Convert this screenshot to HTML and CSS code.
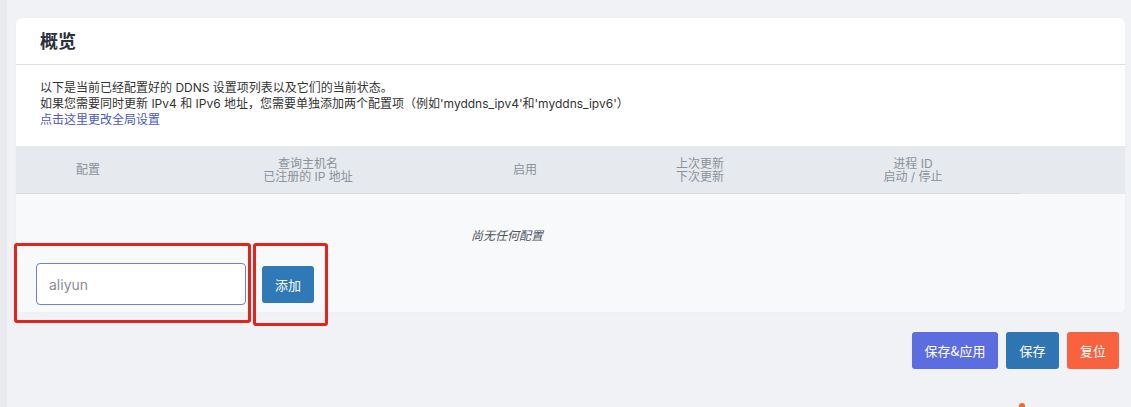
FILE: index.html
```html
<!DOCTYPE html>
<html lang="zh-CN">
<head>
<meta charset="utf-8">
<title>DDNS 概览</title>
<link rel="stylesheet" href="styles.css">
</head>
<body>
<div class="page">
  <div class="card">
    <h2 class="card-title">概览</h2>
    <div class="desc">
      <div>以下是当前已经配置好的 DDNS 设置项列表以及它们的当前状态。</div>
      <div>如果您需要同时更新 IPv4 和 IPv6 地址，您需要单独添加两个配置项（例如'myddns_ipv4'和'myddns_ipv6'）</div>
      <a class="link" href="#">点击这里更改全局设置</a>
    </div>
    <div class="table">
      <div class="thead">
        <div class="thead-grid">
          <div class="th">配置</div>
          <div class="th">查询主机名<br>已注册的 IP 地址</div>
          <div class="th">启用</div>
          <div class="th">上次更新<br>下次更新</div>
          <div class="th">进程 ID<br>启动 / 停止</div>
        </div>
      </div>
      <div class="tbody">
        <div class="empty">尚无任何配置</div>
        <div class="add-row">
          <input class="name-input" type="text" value="aliyun">
          <button class="btn btn-add">添加</button>
        </div>
      </div>
    </div>
  </div>
  <div class="actions">
    <button class="btn btn-apply">保存&amp;应用</button>
    <button class="btn btn-save">保存</button>
    <button class="btn btn-reset">复位</button>
  </div>
  <div class="mark mark-input"></div>
  <div class="mark mark-btn"></div>
  <div class="dot"></div>
</div>
</body>
</html>
```

FILE: styles.css
```css
* { box-sizing: border-box; }
html, body {
  margin: 0;
  height: 100%;
  background: #f1f2f5;
  font-family: "Inter", "Noto Sans CJK SC", sans-serif;
  color: #333;
  overflow: hidden;
}
.page {
  position: relative;
  height: 100%;
  border-left: 7px solid #e9eaed;
  padding: 18px 6px 0 9px;
}
.card {
  background: #fff;
  border-radius: 6px;
  overflow: hidden;
  box-shadow: 0 0 2px rgba(0,0,0,0.04);
}
.card-title {
  margin: 0;
  padding: 0 24px;
  height: 47px;
  line-height: 47px;
  font-size: 18px;
  font-weight: 700;
  color: #2b2e3b;
  border-bottom: 1px solid #dcdfe3;
}
.desc {
  padding: 15px 24px 18px;
  font-size: 12px;
  line-height: 16px;
  color: #333;
}
.link {
  color: #4a58c2;
  text-decoration: none;
}
.thead {
  background: #e6e9ed;
  height: 48px;
}
.thead-grid {
  width: 1004px;
  height: 48px;
  display: grid;
  grid-template-columns: 144px 296px 138px 212px 214px;
  border-bottom: 1px solid #d8dce0;
}
.th {
  display: flex;
  align-items: center;
  justify-content: center;
  text-align: center;
  font-size: 12px;
  line-height: 13px;
  color: #8a929b;
}
.tbody {
  background: #f8f9fa;
  height: 118px;
  padding-top: 34px;
}
.empty {
  width: 982px;
  text-align: center;
  font-size: 12px;
  line-height: 16px;
  font-style: italic;
  color: #4c5260;
}
.add-row {
  display: flex;
  align-items: center;
  padding: 19px 20px 0;
}
.name-input {
  width: 210px;
  height: 42px;
  border: 1px solid #6f7fd1;
  border-radius: 4px;
  background: #fff;
  padding: 0 12px;
  font-family: "Inter", "Noto Sans CJK SC", sans-serif;
  font-size: 14px;
  color: #8a8d93;
  outline: none;
}
.btn {
  border: none;
  border-radius: 3px;
  color: #fff;
  font-family: "Noto Sans CJK SC", sans-serif;
  font-size: 13px;
  height: 37px;
  padding: 0;
  cursor: pointer;
}
.btn-add {
  margin-left: 16px;
  width: 52px;
  background: #2f79b6;
}
.actions {
  display: flex;
  justify-content: flex-end;
  gap: 8px;
  margin-top: 20px;
  padding-right: 6px;
}
.btn-apply { width: 86px; background: #5c6ddf; }
.btn-save { width: 53px; background: #2e75b2; }
.btn-reset { width: 52px; background: #f8623f; }
.mark {
  position: absolute;
  border: 3px solid #e5231d;
  border-radius: 3px;
}
.mark-input { left: 7px; top: 243px; width: 237px; height: 80px; }
.mark-btn { left: 246px; top: 243px; width: 75px; height: 83px; }
.dot {
  position: absolute;
  left: 1012px;
  top: 403px;
  width: 6px;
  height: 6px;
  border-radius: 50%;
  background: #f06a2b;
}
```
